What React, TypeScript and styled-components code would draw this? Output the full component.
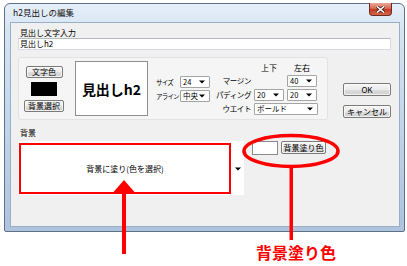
import styled, { createGlobalStyle } from "styled-components";

const GlobalStyle = createGlobalStyle`
  html, body {
    margin: 0;
    padding: 0;
    background: #fff;
  }
  body {
    font-family: "Noto Sans CJK JP", "DejaVu Sans", sans-serif;
    color: #000;
  }
`;

const DropArrow = () => (
  <svg width="6" height="4" viewBox="0 0 6 4">
    <path d="M0 0.5h6L3 3.5z" fill="#000" />
  </svg>
);

const Select = ({ value, width }: { value: string; width: number }) => (
  <S.Select $w={width}>
    <span>{value}</span>
    <DropArrow />
  </S.Select>
);

const Annotations = () => (
  <S.Overlay viewBox="0 0 407 266">
    <ellipse
      cx="291"
      cy="151"
      rx="47"
      ry="15.5"
      fill="none"
      stroke="#f00"
      strokeWidth="3.5"
    />
    <rect x="289.5" y="166" width="3.5" height="74" fill="#f00" />
    <path d="M124 180 L134.5 192 L113.5 192 Z" fill="#f00" />
    <rect x="122" y="191" width="4" height="63" fill="#f00" />
  </S.Overlay>
);

export default function App() {
  return (
    <>
      <GlobalStyle />
      <S.Page>
        <S.Window>
          <S.TitleBar>
            <S.Title>h2見出しの編集</S.Title>
            <S.Close>
              <svg width="9" height="7" viewBox="0 0 9 7">
                <path
                  d="M1 0.5 L8 6.5 M8 0.5 L1 6.5"
                  stroke="#3b1a14"
                  strokeWidth="3"
                />
                <path
                  d="M1 0.5 L8 6.5 M8 0.5 L1 6.5"
                  stroke="#fff"
                  strokeWidth="1.6"
                />
              </svg>
            </S.Close>
          </S.TitleBar>

          <S.Client>
            <S.FieldLabel>見出し文字入力</S.FieldLabel>
            <S.TextInput>見出しh2</S.TextInput>

            <S.MainRow>
              <S.Group>
                <S.ColorColumn>
                  <S.Button $w={37}>文字色</S.Button>
                  <S.Swatch $color="#000" />
                  <S.Button $w={40}>背景選択</S.Button>
                </S.ColorColumn>

                <S.Preview>見出しh2</S.Preview>

                <S.SizeGrid>
                  <S.SmallLabel>サイズ</S.SmallLabel>
                  <Select value="24" width={30} />
                  <S.SmallLabel>アライン</S.SmallLabel>
                  <Select value="中央" width={30} />
                </S.SizeGrid>

                <S.SpacingGrid>
                  <span />
                  <S.ColHead>上下</S.ColHead>
                  <S.ColHead>左右</S.ColHead>

                  <S.RowLabel>マージン</S.RowLabel>
                  <span />
                  <Select value="40" width={30} />

                  <S.RowLabel>パディング</S.RowLabel>
                  <Select value="20" width={30} />
                  <Select value="20" width={30} />

                  <S.RowLabel>ウエイト</S.RowLabel>
                  <S.Wide>
                    <Select value="ボールド" width={64} />
                  </S.Wide>
                </S.SpacingGrid>
              </S.Group>

              <S.DialogButtons>
                <S.Button $w={48} $h={13}>
                  OK
                </S.Button>
                <S.Button $w={48} $h={13}>
                  キャンセル
                </S.Button>
              </S.DialogButtons>
            </S.MainRow>

            <S.SectionLabel>背景</S.SectionLabel>
            <S.BgRow>
              <S.BgPanel>
                <S.BgPreview>背景に塗り(色を選択)</S.BgPreview>
                <S.BgDrop>
                  <DropArrow />
                </S.BgDrop>
              </S.BgPanel>
              <S.BgSwatch />
              <S.Button $w={45} $h={13}>
                背景塗り色
              </S.Button>
            </S.BgRow>
          </S.Client>
        </S.Window>

        <Annotations />
        <S.Callout>背景塗り色</S.Callout>
      </S.Page>
    </>
  );
}

const S = {
  Page: styled.div`
    position: relative;
    width: 407px;
    height: 266px;
    overflow: hidden;
    padding: 3px 0 0 4px;
    box-sizing: border-box;
  `,

  Window: styled.div`
    width: 401px;
    height: 229px;
    box-sizing: border-box;
    display: flex;
    flex-direction: column;
    padding: 0 4px 4px 5px;
    border: 1px solid #5f7188;
    border-radius: 6px 6px 2px 2px;
    background: linear-gradient(
      to bottom,
      #e6eff9 0%,
      #d6e4f3 12%,
      #c8daed 40%,
      #adc3de 100%
    );
  `,

  TitleBar: styled.div`
    height: 18px;
    display: flex;
    align-items: flex-start;
    justify-content: space-between;
    padding: 0 8px 0 3px;
  `,

  Title: styled.span`
    font-size: 8.5px;
    line-height: 10px;
    margin-top: 3px;
    color: #111;
  `,

  Close: styled.div`
    width: 23px;
    height: 13px;
    box-sizing: border-box;
    margin-top: -1px;
    display: flex;
    align-items: center;
    justify-content: center;
    border: 1px solid #6d2b20;
    border-top: none;
    border-radius: 0 0 4px 4px;
    background: linear-gradient(
      to bottom,
      #e9a898 0%,
      #d66c55 45%,
      #c2391f 55%,
      #d46a4f 100%
    );
  `,

  Client: styled.div`
    flex: 1;
    display: flex;
    flex-direction: column;
    background: #f0f0f0;
    border: 1px solid #9aaec6;
    padding: 0 8px 0 7px;
  `,

  FieldLabel: styled.div`
    font-size: 8px;
    line-height: 10px;
    margin-top: 5px;
    padding-left: 2px;
  `,

  TextInput: styled.div`
    height: 12px;
    box-sizing: border-box;
    background: #fff;
    border: 1px solid #d8dce2;
    border-top-color: #b5b9c0;
    font-size: 8px;
    line-height: 10px;
    padding-left: 1px;
  `,

  MainRow: styled.div`
    display: flex;
    margin-top: 7px;
  `,

  Group: styled.div`
    width: 310px;
    height: 63px;
    box-sizing: border-box;
    display: flex;
    align-items: center;
    padding-left: 5px;
    background: #f5f5f5;
    border: 1px solid #e2e2e2;
    border-radius: 3px;
  `,

  ColorColumn: styled.div`
    width: 40px;
    height: 46px;
    display: flex;
    flex-direction: column;
    align-items: center;
    justify-content: space-between;
  `,

  Button: styled.div<{ $w: number; $h?: number }>`
    width: ${(p) => p.$w}px;
    height: ${(p) => p.$h ?? 12}px;
    box-sizing: border-box;
    display: flex;
    align-items: center;
    justify-content: center;
    font-size: 8px;
    white-space: nowrap;
    border: 1px solid #7a7a7a;
    border-radius: 2px;
    background: linear-gradient(
      to bottom,
      #f6f6f6 0%,
      #ebebeb 50%,
      #dddddd 51%,
      #cfcfcf 100%
    );
    box-shadow: inset 0 0 0 1px rgba(255, 255, 255, 0.7);
  `,

  Swatch: styled.div<{ $color: string }>`
    width: 26px;
    height: 14px;
    background: ${(p) => p.$color};
  `,

  Preview: styled.div`
    width: 73px;
    height: 55px;
    box-sizing: border-box;
    margin-left: 11px;
    display: flex;
    align-items: center;
    justify-content: center;
    background: #fff;
    border: 1px solid #8e8e8e;
    font-size: 14px;
    font-weight: 700;
  `,

  SizeGrid: styled.div`
    margin-left: 8px;
    display: grid;
    grid-template-columns: 23px 30px;
    column-gap: 1px;
    row-gap: 2px;
    align-items: center;
  `,

  SmallLabel: styled.span`
    font-size: 6.5px;
    letter-spacing: -0.8px;
    white-space: nowrap;
  `,

  SpacingGrid: styled.div`
    margin-left: 3px;
    display: grid;
    grid-template-columns: 38px 30px 30px;
    grid-template-rows: 10px 12px 12px 12px;
    column-gap: 3px;
    row-gap: 2px;
    align-items: center;
  `,

  ColHead: styled.span`
    font-size: 8px;
    text-align: center;
  `,

  RowLabel: styled.span`
    font-size: 7.5px;
    letter-spacing: -0.4px;
    text-align: right;
    white-space: nowrap;
  `,

  Wide: styled.div`
    grid-column: 2 / span 2;
  `,

  Select: styled.div<{ $w: number }>`
    width: ${(p) => p.$w}px;
    height: 12px;
    box-sizing: border-box;
    display: flex;
    align-items: center;
    justify-content: space-between;
    padding: 0 4px 0 2px;
    background: #fff;
    border: 1px solid #a4a4a4;
    border-radius: 1px;
    font-size: 7.5px;
    white-space: nowrap;
  `,

  DialogButtons: styled.div`
    margin-left: auto;
    margin-top: 26px;
    display: flex;
    flex-direction: column;
    gap: 9px;
  `,

  SectionLabel: styled.div`
    font-size: 8px;
    line-height: 10px;
    margin-top: 8px;
    padding-left: 2px;
  `,

  BgRow: styled.div`
    display: flex;
    align-items: flex-start;
    margin-top: 3px;
  `,

  BgPanel: styled.div`
    width: 226px;
    height: 54px;
    box-sizing: border-box;
    display: flex;
    padding: 2px 0 1px 1px;
    background: #fff;
  `,

  BgPreview: styled.div`
    width: 212px;
    box-sizing: border-box;
    display: flex;
    align-items: center;
    justify-content: center;
    border: 2px solid #f00;
    font-size: 8px;
  `,

  BgDrop: styled.div`
    flex: 1;
    display: flex;
    align-items: center;
    justify-content: center;
  `,

  BgSwatch: styled.div`
    width: 26px;
    height: 14px;
    box-sizing: border-box;
    margin-left: 8px;
    margin-right: 3px;
    background: #fff;
    border: 1px solid #8a8a8a;
  `,

  Overlay: styled.svg`
    position: absolute;
    left: 0;
    top: 0;
    width: 407px;
    height: 266px;
    pointer-events: none;
  `,

  Callout: styled.div`
    position: absolute;
    left: 256px;
    top: 243px;
    font-size: 16px;
    line-height: 18px;
    font-weight: 700;
    color: #f00;
    white-space: nowrap;
  `,
};
